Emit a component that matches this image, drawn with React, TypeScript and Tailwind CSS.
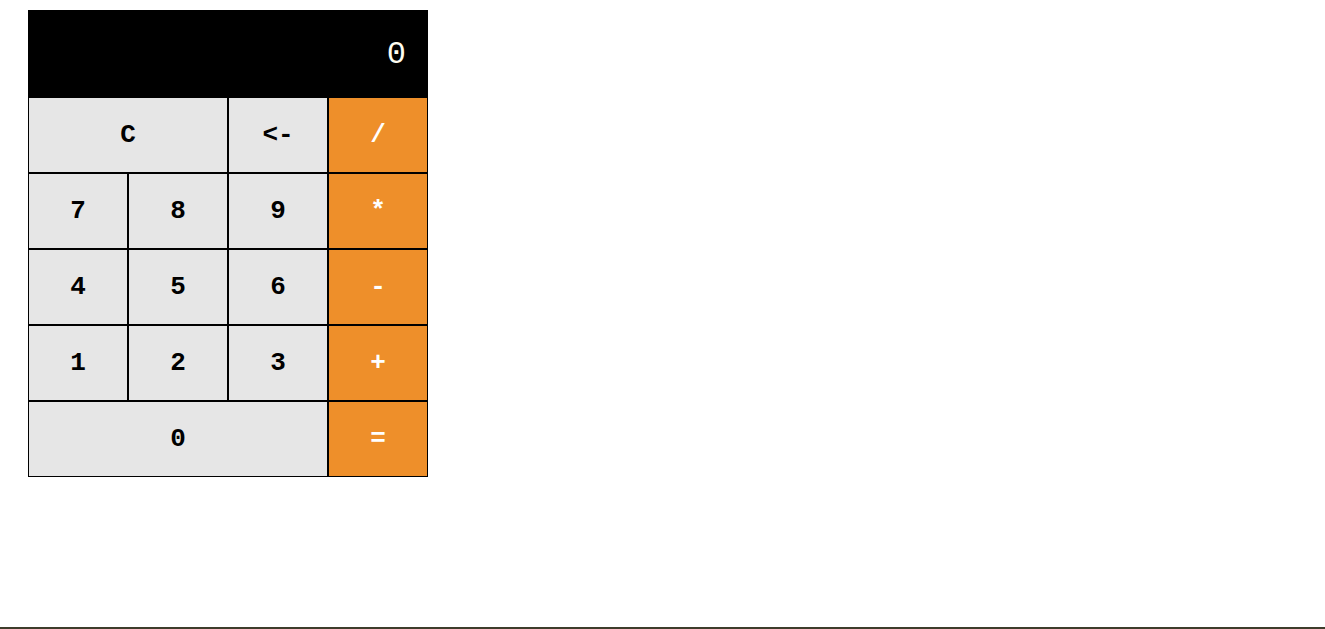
const keys: { label: string; span?: string; op?: boolean }[] = [
  { label: "C", span: "col-span-2" },
  { label: "<-" },
  { label: "/", op: true },
  { label: "7" },
  { label: "8" },
  { label: "9" },
  { label: "*", op: true },
  { label: "4" },
  { label: "5" },
  { label: "6" },
  { label: "-", op: true },
  { label: "1" },
  { label: "2" },
  { label: "3" },
  { label: "+", op: true },
  { label: "0", span: "col-span-3" },
  { label: "=", op: true },
];

export default function App() {
  return (
    <div className="min-h-[629px] bg-white font-['Liberation_Mono',monospace]">
      <div className="ml-[28px] pt-[10px] w-[400px]">
        <div className="flex h-[87px] items-center justify-end bg-black pr-[22px] pt-[2px] text-[32px] text-[#fffdf0]">
          0
        </div>
        <div className="grid grid-cols-4">
          {keys.map((k) => (
            <button
              key={k.label}
              className={`flex h-[76px] items-center justify-center border border-black text-[26px] font-bold ${
                k.span ?? ""
              } ${k.op ? "bg-[#ee8f2a] text-white" : "bg-[#e6e6e6] text-black"}`}
            >
              {k.label}
            </button>
          ))}
        </div>
      </div>
      <div className="fixed bottom-0 left-0 h-[2px] w-full bg-[#3e3c2b]" />
    </div>
  );
}
